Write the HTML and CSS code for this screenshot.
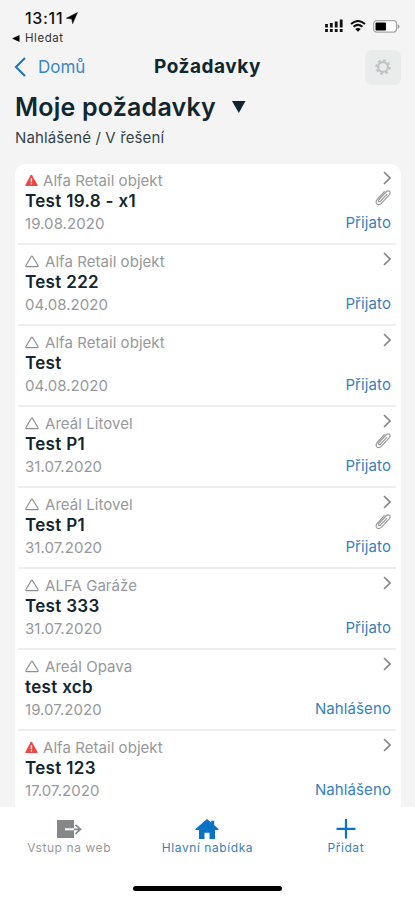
FILE: index.html
```html
<!DOCTYPE html>
<html lang="cs">
<head>
<meta charset="utf-8">
<meta name="viewport" content="width=device-width, initial-scale=1">
<title>Požadavky</title>
<link rel="stylesheet" href="styles.css">
</head>
<body>
<svg class="sprite" aria-hidden="true">
  <symbol id="alert" viewBox="0 0 14 13"><path d="M5.6 1.2Q6.3.1 7 1.2L12.6 11Q13 12 12 12H.9Q-.1 12 .4 11Z" fill="#ef4545"/><path d="M6.4 4.3v4M6.4 9.2v1.3" stroke="#fff" stroke-width="1.4"/></symbol>
  <symbol id="triangle" viewBox="0 0 14 13"><path d="M6.2 1.6Q6.9.5 7.6 1.6L13 10.4Q13.6 11.6 12.3 11.6H1.6Q.3 11.6.9 10.4Z" fill="none" stroke="#8c9092" stroke-width="1.1"/></symbol>
  <symbol id="chevron" viewBox="0 0 8 14"><path d="M1 1l6 6-6 6" fill="none" stroke="#858585" stroke-width="1.6"/></symbol>
  <symbol id="clip" viewBox="0 0 16 17"><path d="M11.8 5.3L5.5 12.2Q4.4 13.1 3.7 12.3Q3.1 11.5 4 10.5L11 3Q12.8 1.2 14.4 2.2Q15.9 3.8 14.2 5.8L6.3 14.4Q3.7 16.7 1.8 14.8Q.2 12.9 2.2 10.4L9.3 2.7" fill="none" stroke="#999" stroke-width="1.15" stroke-linecap="round"/></symbol>
</svg>
<div class="phone">
  <header class="status">
    <div class="status-left">
      <div class="time">13:11<svg class="location" viewBox="0 0 12 12"><path d="M.3 6.2L11.5.5 6.6 11.7 5.8 7Z" stroke="#111" stroke-width=".5"/></svg></div>
      <div class="back-app"><svg class="back-arrow" viewBox="0 0 8 7"><path d="M0 3.5L7.5 0v7Z"/></svg>Hledat</div>
    </div>
    <div class="status-right">
      <svg class="signal" viewBox="0 0 18 14"><path d="M1.5 5v3.5M6.3 4v4.5M11.2 2.5v6M16.2.5v8M1.5 10v3M6.3 10v3M11.2 10v3M16.2 10v3" stroke="#111" stroke-width="2.8"/></svg>
      <svg class="wifi" viewBox="0 0 16 12"><path d="M1 4Q8-2 15 4M3.5 6.8Q8 3 12.5 6.8" fill="none" stroke="#111" stroke-width="2"/><path d="M5.2 9Q8 6.8 10.8 9L8 11.8Z"/></svg>
      <svg class="battery" viewBox="0 0 27 13"><rect x=".7" y=".7" width="22.8" height="11.4" rx="3" fill="#fff" stroke="#a7a7a7" stroke-width="1.2"/><rect x="2.5" y="2.4" width="10.5" height="8" rx="1"/><path d="M24.7 4.2Q28.3 6.4 24.7 8.8Z" fill="#999"/></svg>
    </div>
  </header>
  <nav class="navbar">
    <a class="back"><svg class="back-chevron" viewBox="0 0 12 20"><path d="M11 1L2 10l9 9" fill="none" stroke="#2079c5" stroke-width="2.2"/></svg><span>Domů</span></a>
    <h1>Požadavky</h1>
    <button class="settings" aria-label="Nastavení"><svg viewBox="0 0 16 16"><circle cx="8" cy="8" r="4.9" fill="none" stroke="#bec4c6" stroke-width="2.2"/><circle cx="8" cy="8" r="6.8" fill="none" stroke="#bec4c6" stroke-width="1.9" stroke-dasharray="2.67 2.67"/></svg></button>
  </nav>
  <section class="heading">
    <h2>Moje požadavky<svg class="caret" viewBox="0 0 14 12"><path d="M0 0h13.5L6.8 12Z"/></svg></h2>
    <p>Nahlášené / V řešení</p>
  </section>
  <main class="list">
    <article class="row"><div class="info"><div class="place urgent"><svg><use href="#alert"/></svg><span>Alfa Retail objekt</span></div><h3>Test 19.8 - x1</h3><time>19.08.2020</time></div><div class="side"><svg class="chevron"><use href="#chevron"/></svg><svg class="clip"><use href="#clip"/></svg><span class="state">Přijato</span></div></article>
    <article class="row"><div class="info"><div class="place"><svg><use href="#triangle"/></svg><span>Alfa Retail objekt</span></div><h3>Test 222</h3><time>04.08.2020</time></div><div class="side"><svg class="chevron"><use href="#chevron"/></svg><span class="state">Přijato</span></div></article>
    <article class="row"><div class="info"><div class="place"><svg><use href="#triangle"/></svg><span>Alfa Retail objekt</span></div><h3>Test</h3><time>04.08.2020</time></div><div class="side"><svg class="chevron"><use href="#chevron"/></svg><span class="state">Přijato</span></div></article>
    <article class="row"><div class="info"><div class="place"><svg><use href="#triangle"/></svg><span>Areál Litovel</span></div><h3>Test P1</h3><time>31.07.2020</time></div><div class="side"><svg class="chevron"><use href="#chevron"/></svg><svg class="clip"><use href="#clip"/></svg><span class="state">Přijato</span></div></article>
    <article class="row"><div class="info"><div class="place"><svg><use href="#triangle"/></svg><span>Areál Litovel</span></div><h3>Test P1</h3><time>31.07.2020</time></div><div class="side"><svg class="chevron"><use href="#chevron"/></svg><svg class="clip"><use href="#clip"/></svg><span class="state">Přijato</span></div></article>
    <article class="row"><div class="info"><div class="place"><svg><use href="#triangle"/></svg><span>ALFA Garáže</span></div><h3>Test 333</h3><time>31.07.2020</time></div><div class="side"><svg class="chevron"><use href="#chevron"/></svg><span class="state">Přijato</span></div></article>
    <article class="row"><div class="info"><div class="place"><svg><use href="#triangle"/></svg><span>Areál Opava</span></div><h3>test xcb</h3><time>19.07.2020</time></div><div class="side"><svg class="chevron"><use href="#chevron"/></svg><span class="state">Nahlášeno</span></div></article>
    <article class="row"><div class="info"><div class="place urgent"><svg><use href="#alert"/></svg><span>Alfa Retail objekt</span></div><h3>Test 123</h3><time>17.07.2020</time></div><div class="side"><svg class="chevron"><use href="#chevron"/></svg><span class="state">Nahlášeno</span></div></article>
  </main>
  <footer class="tabs">
    <div class="tab-row">
      <a class="tab web"><svg viewBox="0 0 26 20"><path d="M1 1h17v18H1Z" fill="#858788"/><path d="M9 10.3h9" stroke="#fff" stroke-width="2"/><path d="M18 10.3h6.5M19.5 5.8l5 4.5-5 4.5" fill="none" stroke="#858788" stroke-width="1.7"/></svg><span>Vstup na web</span></a>
      <a class="tab home"><svg viewBox="0 0 26 20"><path d="M13 0l4.2 3.6V1.8h3v4.4L24.5 10v1H21v9h-5.5v-6.2h-5V20H5v-9H1.5v-1Z" fill="#0873c4"/></svg><span>Hlavní nabídka</span></a>
      <a class="tab add"><svg viewBox="0 0 26 20"><path d="M13 0v19.5M3.5 9.8h19" stroke="#0873c4" stroke-width="2.2"/></svg><span>Přidat</span></a>
    </div>
    <div class="home-bar"></div>
  </footer>
</div>
</body>
</html>
```
FILE: styles.css
```css
* { box-sizing: border-box; }
body { margin: 0; background: #f4f4f4; font-family: Inter, "Liberation Sans", sans-serif; color: #102630; }
h1, h2, h3, p { margin: 0; }
svg { display: block; flex: none; }
.sprite { width: 0; height: 0; position: absolute; }
.phone { width: 415px; height: 900px; display: flex; flex-direction: column; overflow: hidden; }
.status { height: 48px; display: flex; justify-content: space-between; padding: 8px 15px 0 12px; color: #111; }
.time { display: flex; align-items: center; height: 20px; padding-left: 13px; font-size: 16px; font-weight: 500; letter-spacing: .7px; }
.location { width: 12px; height: 12px; margin-left: 3px; }
.back-app { display: flex; align-items: center; height: 20px; gap: 5px; font-size: 11.5px; letter-spacing: .55px; color: #333; }
.back-arrow { width: 8px; height: 7px; }
.status-right { display: flex; align-items: center; height: 20px; margin-top: 8px; }
.signal { width: 18px; height: 14px; margin-right: 7px; }
.wifi { width: 16px; height: 12px; margin-right: 7px; }
.battery { width: 27px; height: 13px; margin-right: 0; }
.navbar { height: 38px; display: grid; grid-template-columns: 110px 1fr 110px; align-items: center; padding: 0 14px; }
.back { display: flex; align-items: center; gap: 12px; color: #3c87c8; font-size: 17px; }
.back-chevron { width: 12px; height: 20px; }
h1 { text-align: center; font-size: 19px; line-height: 24px; font-weight: 700; letter-spacing: .55px; }
.settings { justify-self: end; width: 36px; height: 35px; padding: 0; border: 0; border-radius: 7px; background: #eaebeb; display: grid; place-items: center; }
.settings svg { width: 16px; height: 16px; }
.heading { height: 78px; padding: 6px 15px 0; }
h2 { display: flex; align-items: center; height: 30px; font-size: 25px; font-weight: 600; letter-spacing: .2px; white-space: nowrap; }
.caret { width: 14px; height: 12px; margin-left: 16px; fill: #102630; }
.heading p { font-size: 15px; line-height: 20px; margin-top: 6px; color: #34444c; letter-spacing: .13px; }
.list { flex: 1; min-height: 0; margin: 0 14px 0 15px; padding: 0 5px 0 3px; border-radius: 10px 10px 0 0; background: #fff; overflow: hidden; }
.row { height: 81px; display: flex; justify-content: space-between; border-bottom: 2px solid #eee; padding: 7px 5px 0 7px; }
.row:last-child { border: 0; }
.info { display: flex; flex-direction: column; }
.place { display: flex; align-items: center; gap: 6px; height: 19px; font-size: 15px; letter-spacing: .05px; color: #96999b; white-space: nowrap; }
.place svg { width: 14px; height: 13px; }
.place.urgent { gap: 4px; }
h3 { font-size: 17px; line-height: 23px; font-weight: 600; letter-spacing: .33px; }
time { font-size: 15px; line-height: 22px; color: #96999b; letter-spacing: .05px; }
.side { display: flex; flex-direction: column; align-items: flex-end; }
.chevron { width: 8px; height: 14px; }
.clip { width: 16px; height: 17px; margin-top: 4px; }
.state { margin-top: auto; margin-bottom: 9px; line-height: 22px; font-size: 15px; color: #3780bd; letter-spacing: .1px; }
.row:last-child .state { margin-bottom: 11px; }
.tabs { flex: none; height: 93px; background: #fff; }
.tab-row { height: 77px; display: grid; grid-template-columns: 1fr 1fr 1fr; padding-top: 12px; }
.tab { display: flex; flex-direction: column; align-items: center; font-size: 12px; line-height: 18px; letter-spacing: .58px; white-space: nowrap; color: #3780bd; }
.tab svg { width: 26px; height: 20px; }
.web { color: #999; }
.home-bar { width: 149px; height: 5px; border-radius: 3px; background: #000; margin: 2px auto 0; }
```
